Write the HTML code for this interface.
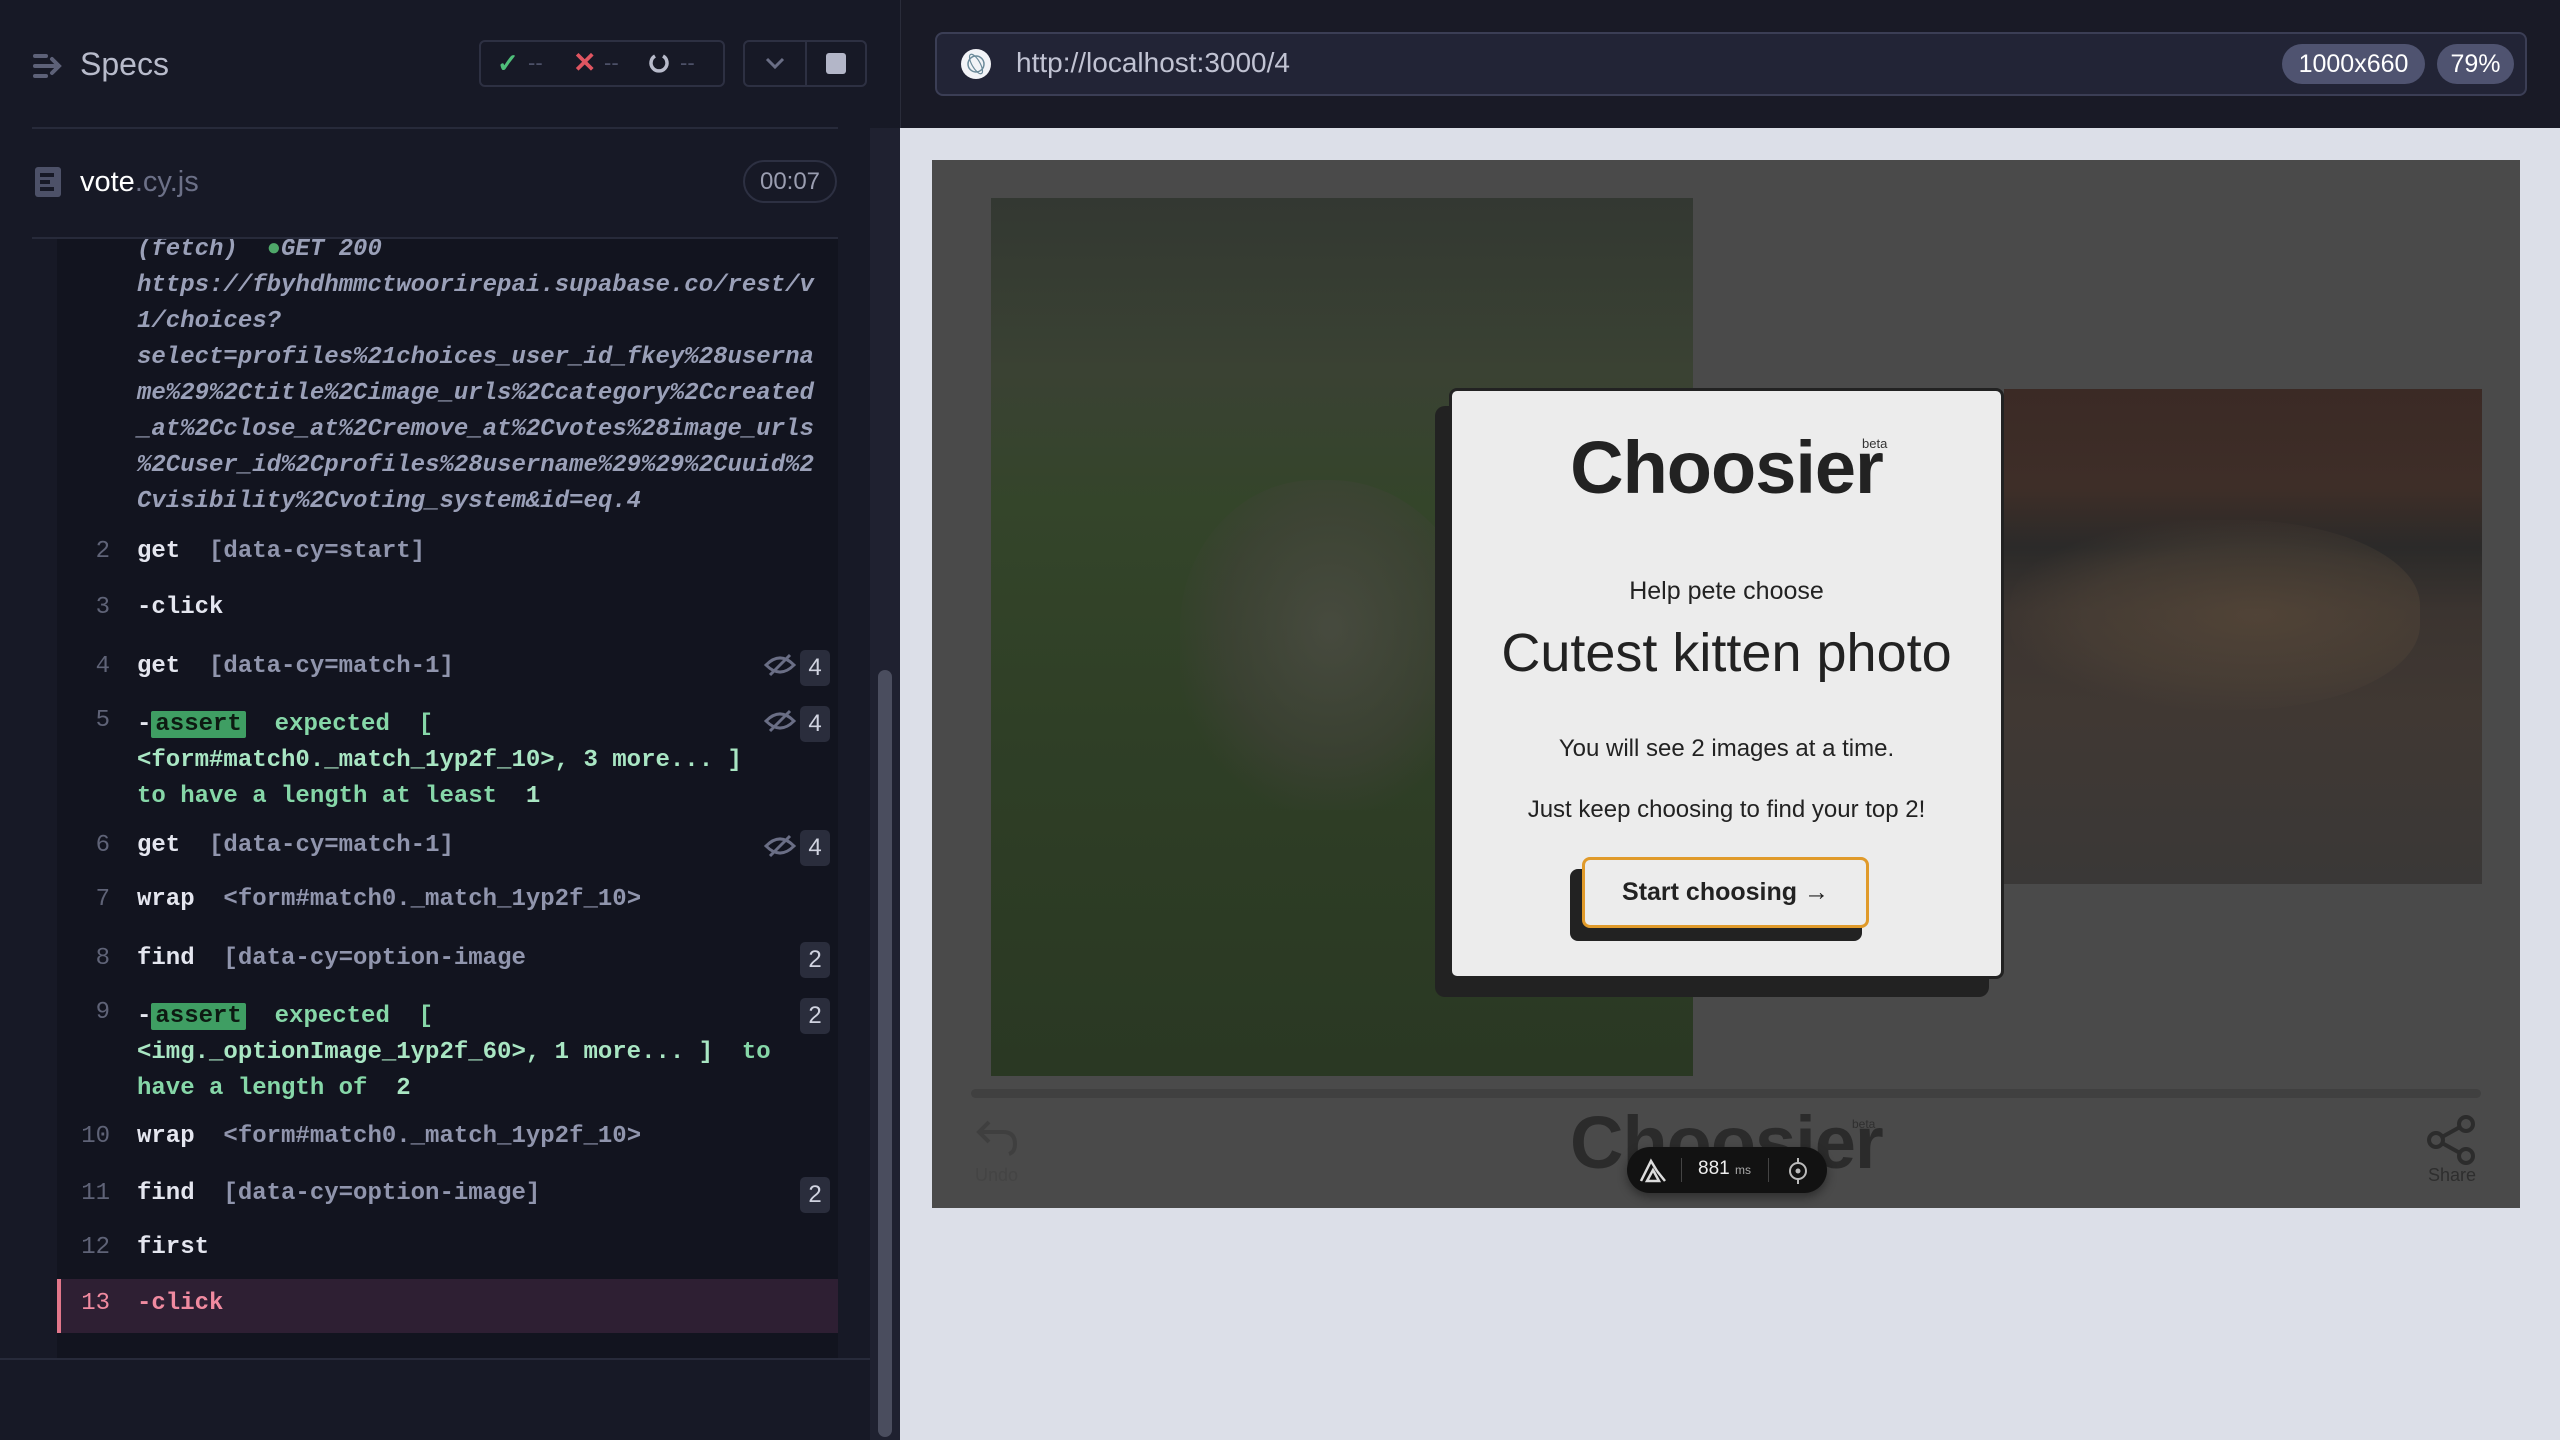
<!DOCTYPE html>
<html><head><meta charset="utf-8"><style>
*{box-sizing:border-box;margin:0;padding:0}
body{width:2560px;height:1440px;overflow:hidden;background:#171926;font-family:"Liberation Sans",sans-serif;position:relative}
.abs{position:absolute}
.mono{font-family:"Liberation Mono",monospace;font-size:24px;line-height:36px;white-space:pre}
.num{position:absolute;width:50px;text-align:right;left:60px;color:#5f6377;font-family:"Liberation Mono",monospace;font-size:24px}
.ln{position:absolute;left:137px;font-family:"Liberation Mono",monospace;font-size:24px;white-space:pre;font-weight:bold}
.cmd{color:#e4e6ef}
.sel{color:#9095ad}
.grn{color:#86d7a8}
.asrt{background:#3f9e63;color:#0d1a12;padding:0 4px;border-radius:2px}
.badge{position:absolute;left:800px;width:30px;height:36px;background:#2a2d3c;border-radius:5px;color:#d0d3e0;font-size:24px;text-align:center;line-height:36px;font-family:"Liberation Sans",sans-serif}
.eye{position:absolute;left:764px}
</style></head><body>
<div class="abs" style="left:0;top:0;width:900px;height:1440px;background:#171926"></div>
<svg class="abs" style="left:32px;top:52px" width="32" height="28" viewBox="0 0 32 28"><g stroke="#5d6178" stroke-width="4" stroke-linecap="round" fill="none"><line x1="3" y1="4" x2="14" y2="4"/><line x1="3" y1="14" x2="22" y2="14"/><line x1="3" y1="24" x2="14" y2="24"/><polyline points="20,7 27,14 20,21"/></g></svg>
<div class="abs" style="left:80px;top:46px;font-size:32px;color:#b8bbcb">Specs</div>
<div class="abs" style="left:479px;top:40px;width:246px;height:47px;border:2px solid #2d3042;border-radius:6px"></div>
<div class="abs" style="left:497px;top:48px;font-size:26px;color:#4fbf7a;font-weight:bold">✓</div>
<div class="abs" style="left:528px;top:50px;font-size:22px;color:#4d5168">--</div>
<div class="abs" style="left:573px;top:46px;font-size:28px;color:#e05561;font-weight:bold">✕</div>
<div class="abs" style="left:604px;top:50px;font-size:22px;color:#4d5168">--</div>
<svg class="abs" style="left:648px;top:52px" width="22" height="24"><path d="M7 4 A8 8 0 1 0 15 4" stroke="#b8bbcb" stroke-width="3.5" fill="none"/></svg>
<div class="abs" style="left:680px;top:50px;font-size:22px;color:#4d5168">--</div>
<div class="abs" style="left:743px;top:40px;width:124px;height:47px;border:2px solid #2d3042;border-radius:6px"></div>
<div class="abs" style="left:805px;top:42px;width:2px;height:43px;background:#2d3042"></div>
<svg class="abs" style="left:764px;top:54px" width="22" height="18"><polyline points="3,5 11,13 19,5" stroke="#6a6e85" stroke-width="3" fill="none"/></svg>
<div class="abs" style="left:826px;top:53px;width:20px;height:21px;background:#b3b6c8;border-radius:3px"></div>
<div class="abs" style="left:32px;top:127px;width:806px;height:2px;background:#272a3a"></div>
<svg class="abs" style="left:34px;top:166px" width="28" height="32"><rect x="1" y="1" width="26" height="30" rx="3" fill="#4d5168"/><rect x="6" y="7" width="14" height="4" fill="#171926"/><rect x="6" y="14" width="10" height="4" fill="#171926"/><rect x="6" y="21" width="14" height="4" fill="#171926"/></svg>
<div class="abs" style="left:80px;top:166px;font-size:29px;color:#fff">vote<span style="color:#6c7087">.cy.js</span></div>
<div class="abs" style="left:743px;top:160px;width:94px;height:43px;border:2px solid #2d3042;border-radius:22px;color:#9a9db0;font-size:24px;text-align:center;line-height:39px">00:07</div>
<div class="abs" style="left:57px;top:239px;width:781px;height:1120px;background:#12141f"></div>
<div class="abs mono" style="left:137px;top:232px;color:#9aa0b8;font-style:italic;font-weight:bold">(fetch)  <span style="color:#4fa86a">●</span>GET 200
https://fbyhdhmmctwoorirepai.supabase.co/rest/v
1/choices?
select=profiles%21choices_user_id_fkey%28userna
me%29%2Ctitle%2Cimage_urls%2Ccategory%2Ccreated
_at%2Cclose_at%2Cremove_at%2Cvotes%28image_urls
%2Cuser_id%2Cprofiles%28username%29%29%2Cuuid%2
Cvisibility%2Cvoting_system&amp;id=eq.4</div>
<div class="abs" style="left:57px;top:229px;width:781px;height:10px;background:#171926"></div>
<div class="abs" style="left:32px;top:237px;width:806px;height:2px;background:#272a3a"></div>

<div class="num" style="top:538px">2</div><div class="ln" style="top:538px"><span class="cmd">get</span>  <span class="sel">[data-cy=start]</span></div>
<div class="num" style="top:594px">3</div><div class="ln cmd" style="top:594px">-click</div>
<div class="num" style="top:653px">4</div><div class="ln" style="top:653px"><span class="cmd">get</span>  <span class="sel">[data-cy=match-1]</span></div>
<div class="num" style="top:707px">5</div><div class="ln grn" style="top:707px;line-height:36px"><span class="cmd">-</span><span class="asrt">assert</span>  expected  [
<span style="color:#a9e6c3">&lt;form#match0._match_1yp2f_10&gt;, 3 more... ]</span>
to have a length at least  <span style="color:#a9e6c3">1</span></div>
<div class="num" style="top:832px">6</div><div class="ln" style="top:832px"><span class="cmd">get</span>  <span class="sel">[data-cy=match-1]</span></div>
<div class="num" style="top:886px">7</div><div class="ln" style="top:886px"><span class="cmd">wrap</span>  <span class="sel">&lt;form#match0._match_1yp2f_10&gt;</span></div>
<div class="num" style="top:945px">8</div><div class="ln" style="top:945px"><span class="cmd">find</span>  <span class="sel">[data-cy=option-image</span></div>
<div class="num" style="top:999px">9</div><div class="ln grn" style="top:999px;line-height:36px"><span class="cmd">-</span><span class="asrt">assert</span>  expected  [
<span style="color:#a9e6c3">&lt;img._optionImage_1yp2f_60&gt;, 1 more... ]</span>  to
have a length of  <span style="color:#a9e6c3">2</span></div>
<div class="num" style="top:1123px">10</div><div class="ln" style="top:1123px"><span class="cmd">wrap</span>  <span class="sel">&lt;form#match0._match_1yp2f_10&gt;</span></div>
<div class="num" style="top:1180px">11</div><div class="ln" style="top:1180px"><span class="cmd">find</span>  <span class="sel">[data-cy=option-image]</span></div>
<div class="num" style="top:1234px">12</div><div class="ln cmd" style="top:1234px">first</div>
<div class="abs" style="left:57px;top:1279px;width:781px;height:54px;background:#2e1f33;border-left:4px solid #e2778b"></div>
<div class="num" style="top:1290px;color:#f08aa0">13</div><div class="ln" style="top:1290px;color:#f08aa0">-click</div>

<svg class="eye" style="top:653px" width="32" height="24" viewBox="0 0 32 24"><g stroke="#6a6e85" stroke-width="3" fill="none"><path d="M2 12 Q16 -2 30 12 Q16 26 2 12Z"/><line x1="6" y1="22" x2="26" y2="2"/></g></svg>
<div class="badge" style="top:650px">4</div>
<svg class="eye" style="top:709px" width="32" height="24" viewBox="0 0 32 24"><g stroke="#6a6e85" stroke-width="3" fill="none"><path d="M2 12 Q16 -2 30 12 Q16 26 2 12Z"/><line x1="6" y1="22" x2="26" y2="2"/></g></svg>
<div class="badge" style="top:706px">4</div>
<svg class="eye" style="top:834px" width="32" height="24" viewBox="0 0 32 24"><g stroke="#6a6e85" stroke-width="3" fill="none"><path d="M2 12 Q16 -2 30 12 Q16 26 2 12Z"/><line x1="6" y1="22" x2="26" y2="2"/></g></svg>
<div class="badge" style="top:830px">4</div>
<div class="badge" style="top:942px">2</div>
<div class="badge" style="top:998px">2</div>
<div class="badge" style="top:1177px">2</div>

<div class="abs" style="left:0;top:1358px;width:870px;height:2px;background:#272a3a"></div>
<div class="abs" style="left:870px;top:128px;width:30px;height:1312px;background:#1f2130"></div>
<div class="abs" style="left:878px;top:670px;width:14px;height:767px;background:#4a4d5e;border-radius:7px"></div>

<div class="abs" style="left:900px;top:0;width:1660px;height:128px;background:#191a26;border-left:1px solid #2a2c3a"></div>
<div class="abs" style="left:935px;top:32px;width:1592px;height:64px;background:#222436;border:2px solid #3b3e55;border-radius:8px"></div>
<svg class="abs" style="left:960px;top:48px" width="32" height="32"><circle cx="16" cy="16" r="15" fill="#f2f3f7"/><circle cx="16" cy="16" r="8" fill="none" stroke="#6b8a9a" stroke-width="1.5"/><ellipse cx="16" cy="16" rx="11" ry="4" fill="none" stroke="#6b8a9a" stroke-width="1.2" transform="rotate(60 16 16)"/></svg>
<div class="abs" style="left:1016px;top:47px;font-size:28px;color:#c1c3d3">http://localhost:3000/4</div>
<div class="abs" style="left:2282px;top:44px;width:143px;height:40px;background:#4f5370;border-radius:20px;color:#fff;font-size:25px;text-align:center;line-height:40px">1000x660</div>
<div class="abs" style="left:2437px;top:44px;width:77px;height:40px;background:#4f5370;border-radius:20px;color:#fff;font-size:25px;text-align:center;line-height:40px">79%</div>

<div class="abs" style="left:900px;top:128px;width:1660px;height:1312px;background:#dcdfe8"></div>
<div class="abs" style="left:932px;top:160px;width:1588px;height:1048px;background:#4a4a4a"></div>
<div class="abs" style="left:991px;top:198px;width:702px;height:878px;background:linear-gradient(180deg,#333832 0%,#3a4233 20%,#34452a 35%,#2f3f26 60%,#2a3823 100%)"></div>
<div class="abs" style="left:1180px;top:480px;width:300px;height:330px;border-radius:45% 50% 40% 40%;background:radial-gradient(ellipse at 50% 45%,rgba(80,78,72,.7) 0%,rgba(68,66,60,.5) 50%,rgba(60,60,55,0) 75%)"></div>
<div class="abs" style="left:2004px;top:389px;width:478px;height:495px;background:linear-gradient(180deg,#3b2a25 0%,#3e2e28 20%,#2b2a29 32%,#3b3430 45%,#403833 65%,#3a3837 100%)"></div>
<div class="abs" style="left:2010px;top:520px;width:410px;height:190px;border-radius:45%;background:radial-gradient(ellipse at 60% 50%,rgba(90,74,58,.7) 0%,rgba(79,67,55,.5) 50%,rgba(70,60,50,0) 75%)"></div>

<div class="abs" style="left:1435px;top:406px;width:554px;height:591px;background:#222;border-radius:10px"></div>
<div class="abs" style="left:1449px;top:388px;width:555px;height:591px;background:#ececec;border:3px solid #222;border-radius:8px"></div>
<div class="abs" style="left:1449px;top:425px;width:555px;text-align:center;font-size:74px;font-weight:bold;color:#222;letter-spacing:-1px">Choosier</div>
<div class="abs" style="left:1862px;top:436px;font-size:13px;color:#333">beta</div>
<div class="abs" style="left:1449px;top:577px;width:555px;text-align:center;font-size:25px;color:#222">Help pete choose</div>
<div class="abs" style="left:1449px;top:622px;width:555px;text-align:center;font-size:54px;color:#222">Cutest kitten photo</div>
<div class="abs" style="left:1449px;top:735px;width:555px;text-align:center;font-size:24px;color:#222">You will see 2 images at a time.</div>
<div class="abs" style="left:1449px;top:796px;width:555px;text-align:center;font-size:24px;color:#222">Just keep choosing to find your top 2!</div>
<div class="abs" style="left:1570px;top:869px;width:292px;height:72px;background:#222;border-radius:8px"></div>
<div class="abs" style="left:1582px;top:857px;width:287px;height:71px;background:#ececec;border:3px solid #e09a2a;border-radius:8px;text-align:center;line-height:65px;font-size:25px;font-weight:bold;color:#222">Start choosing →</div>

<div class="abs" style="left:971px;top:1089px;width:1510px;height:9px;background:#404040;border-radius:5px"></div>
<svg class="abs" style="left:975px;top:1118px" width="48" height="40"><path d="M14 4 L4 14 L14 24 M4 14 H28 Q40 14 40 26 Q40 34 34 36" stroke="#3f3f3f" stroke-width="4" fill="none"/></svg>
<div class="abs" style="left:975px;top:1165px;font-size:18px;color:#444">Undo</div>
<div class="abs" style="left:1570px;top:1100px;font-size:74px;font-weight:bold;color:#2b2b2b;letter-spacing:-1px">Choosier</div>
<div class="abs" style="left:1852px;top:1117px;font-size:12px;color:#2f2f2f">beta</div>
<svg class="abs" style="left:2426px;top:1115px" width="52" height="50"><g stroke="#2c2c2c" stroke-width="4" fill="none"><circle cx="40" cy="9" r="7"/><circle cx="10" cy="25" r="7"/><circle cx="40" cy="41" r="7"/><line x1="16" y1="22" x2="34" y2="12"/><line x1="16" y1="28" x2="34" y2="38"/></g></svg>
<div class="abs" style="left:2428px;top:1165px;font-size:18px;color:#2e2e2e">Share</div>
<div class="abs" style="left:1627px;top:1147px;width:200px;height:46px;background:#121212;border-radius:23px;box-shadow:0 4px 10px rgba(0,0,0,.4)"></div>
<svg class="abs" style="left:1639px;top:1157px" width="28" height="26"><path d="M2 24 L12 4 L18 14 M8 24 L14 13 L20 24 Z M18 14 L26 24" stroke="#ddd" stroke-width="2.5" fill="none"/></svg>
<div class="abs" style="left:1681px;top:1158px;width:1px;height:24px;background:#444"></div>
<div class="abs" style="left:1698px;top:1158px;font-size:19px;color:#eee">881 <span style="font-size:12px;color:#aaa">ms</span></div>
<div class="abs" style="left:1768px;top:1158px;width:1px;height:24px;background:#444"></div>
<svg class="abs" style="left:1786px;top:1157px" width="24" height="28"><circle cx="12" cy="14" r="8" stroke="#bbb" stroke-width="2" fill="none"/><circle cx="12" cy="14" r="2.5" fill="#bbb"/><line x1="12" y1="1" x2="12" y2="6" stroke="#bbb" stroke-width="2"/><line x1="12" y1="22" x2="12" y2="27" stroke="#bbb" stroke-width="2"/></svg>
</body></html>
